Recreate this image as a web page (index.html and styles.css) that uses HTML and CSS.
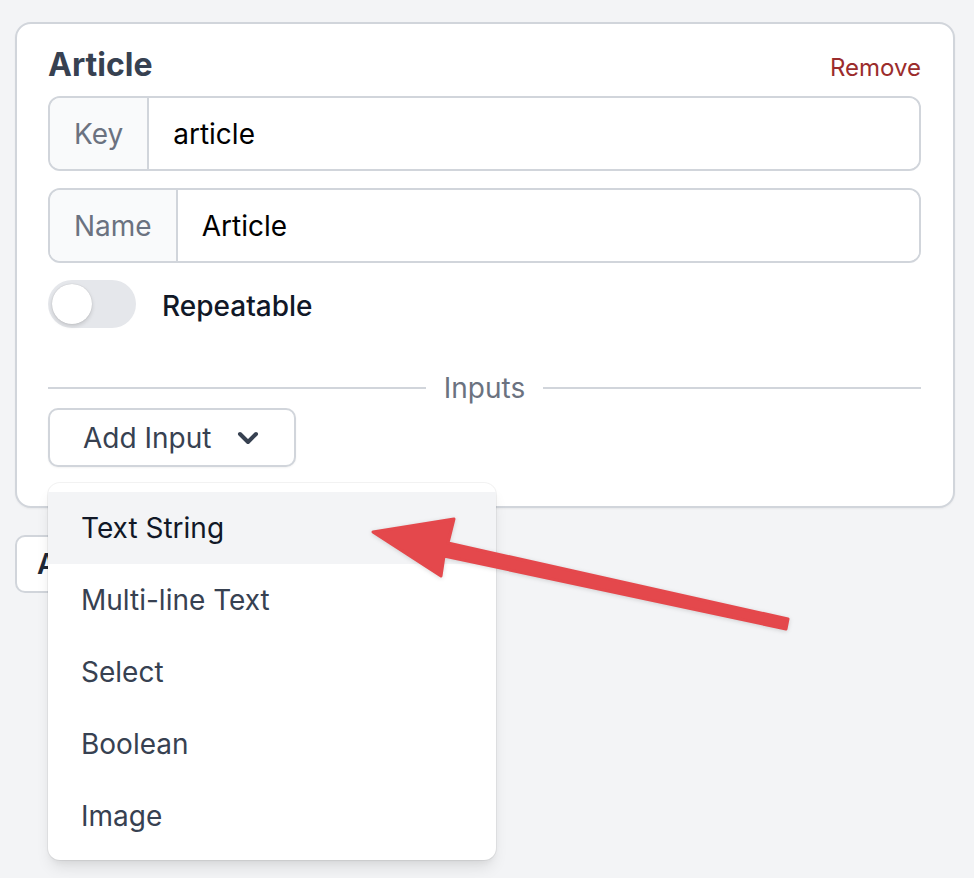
FILE: index.html
```html
<!DOCTYPE html>
<html lang="en">
<head>
  <meta charset="UTF-8">
  <meta name="viewport" content="width=device-width, initial-scale=1.0">
  <title>Content Types</title>
  <link rel="stylesheet" href="styles.css">
</head>
<body>
  <div class="page">
    <section class="card">
      <div class="card-head">
        <h2 class="title">Article</h2>
        <a class="remove" href="#">Remove</a>
      </div>

      <div class="field">
        <span class="addon">Key</span>
        <input class="field-input" type="text" value="article">
      </div>

      <div class="field">
        <span class="addon">Name</span>
        <input class="field-input" type="text" value="Article">
      </div>

      <label class="toggle-row">
        <span class="toggle"><span class="knob"></span></span>
        <span class="toggle-label">Repeatable</span>
      </label>

      <div class="divider"><span>Inputs</span></div>

      <div class="add-wrap">
        <button class="add-btn">
          Add Input
          <svg class="chevron" width="22" height="14" viewBox="0 0 22 14">
            <polyline points="3,3 11,11 19,3" fill="none" stroke="currentColor" stroke-width="4" stroke-linecap="round" stroke-linejoin="round"/>
          </svg>
        </button>

        <ul class="menu">
          <li class="menu-item active">Text String</li>
          <li class="menu-item">Multi-line Text</li>
          <li class="menu-item">Select</li>
          <li class="menu-item">Boolean</li>
          <li class="menu-item">Image</li>
        </ul>
      </div>
    </section>

    <button class="group-btn">Add Content Type</button>
  </div>

  <!-- annotation arrow drawn over the page -->
  <svg class="arrow" width="974" height="878" viewBox="0 0 974 878">
    <path d="M373 532 L454 519 L448 543 L788 619 L786 629 L444 556 L441 576 Z"
          fill="#e4484c" stroke="#e4484c" stroke-width="3" stroke-linejoin="round"/>
  </svg>
</body>
</html>
```

FILE: styles.css
```css
* {
  box-sizing: border-box;
}

body {
  margin: 0;
  background-color: #f3f4f6;
  font-family: Inter, "Noto Sans", sans-serif;
  color: #374151;
  position: relative;
  height: 878px;
  overflow: hidden;
}

.page {
  padding: 22px 19px 0 15px;
}

.card {
  background: #fff;
  border: 2px solid #d1d5db;
  border-radius: 16px;
  padding: 21px 32px 39px 31px;
  box-shadow: 0 1px 2px rgba(0, 0, 0, 0.05);
}

.card-head {
  display: flex;
  justify-content: space-between;
  align-items: baseline;
  height: 40px;
  margin-bottom: 11px;
}

.title {
  margin: 0;
  font-size: 32px;
  line-height: 40px;
  font-weight: 700;
  color: #374151;
}

.remove {
  font-size: 24px;
  color: #9b2c2c;
  text-decoration: none;
}

.field {
  display: flex;
  height: 75px;
  border: 2px solid #d1d5db;
  border-radius: 12px;
  overflow: hidden;
  margin-bottom: 17px;
}

.addon {
  display: flex;
  align-items: center;
  padding: 0 24px;
  background: #f9fafb;
  border-right: 2px solid #d1d5db;
  color: #6b7280;
  font-size: 28px;
}

.field-input {
  flex: 1;
  border: none;
  outline: none;
  padding: 0 24px;
  font-family: inherit;
  font-size: 28px;
  color: #000;
  background: #fff;
}

.toggle-row {
  display: flex;
  align-items: center;
  gap: 26px;
}

.toggle {
  width: 88px;
  height: 48px;
  border-radius: 24px;
  background: #e5e7eb;
  padding: 4px;
  display: flex;
}

.knob {
  width: 40px;
  height: 40px;
  border-radius: 50%;
  background: #fff;
  box-shadow: 0 2px 4px rgba(0, 0, 0, 0.15), 0 0 1px rgba(0, 0, 0, 0.2);
}

.toggle-label {
  font-size: 28px;
  font-weight: 500;
  color: #111827;
  padding-top: 3px;
}

.divider {
  display: flex;
  align-items: center;
  gap: 18px;
  height: 32px;
  margin-top: 44px;
  color: #6b7280;
  font-size: 28px;
}

.divider::before,
.divider::after {
  content: "";
  flex: 1;
  height: 2px;
  background: #d1d5db;
}

.add-wrap {
  position: relative;
  margin-top: 4px;
}

.add-btn {
  display: inline-flex;
  align-items: center;
  gap: 26px;
  height: 59px;
  width: 248px;
  padding: 0 0 0 33px;
  background: #fff;
  border: 2px solid #d1d5db;
  border-radius: 10px;
  font-family: inherit;
  font-size: 28px;
  color: #374151;
  box-shadow: 0 1px 2px rgba(0, 0, 0, 0.05);
}

.chevron {
  display: block;
}

.menu {
  position: absolute;
  top: 75px;
  left: 0;
  width: 448px;
  margin: 0;
  padding: 9px 0 8px;
  list-style: none;
  background: #fff;
  border-radius: 12px;
  box-shadow: 0 0 0 1px rgba(0, 0, 0, 0.05), 0 10px 15px -3px rgba(0, 0, 0, 0.1), 0 4px 6px -2px rgba(0, 0, 0, 0.05);
  z-index: 2;
}

.menu-item {
  height: 72px;
  display: flex;
  align-items: center;
  padding: 0 33px;
  font-size: 28px;
  color: #374151;
}

.menu-item.active {
  background: #f3f4f6;
  color: #111827;
}

.group-btn {
  margin-top: 27px;
  height: 58px;
  padding: 0 20px;
  background: #fff;
  border: 2px solid #d1d5db;
  border-radius: 10px;
  font-family: inherit;
  font-size: 28px;
  font-weight: 600;
  color: #1f2937;
}

.arrow {
  position: absolute;
  top: 0;
  left: 0;
  pointer-events: none;
  z-index: 3;
  filter: drop-shadow(0 1px 2px rgba(0, 0, 0, 0.15));
}
```
